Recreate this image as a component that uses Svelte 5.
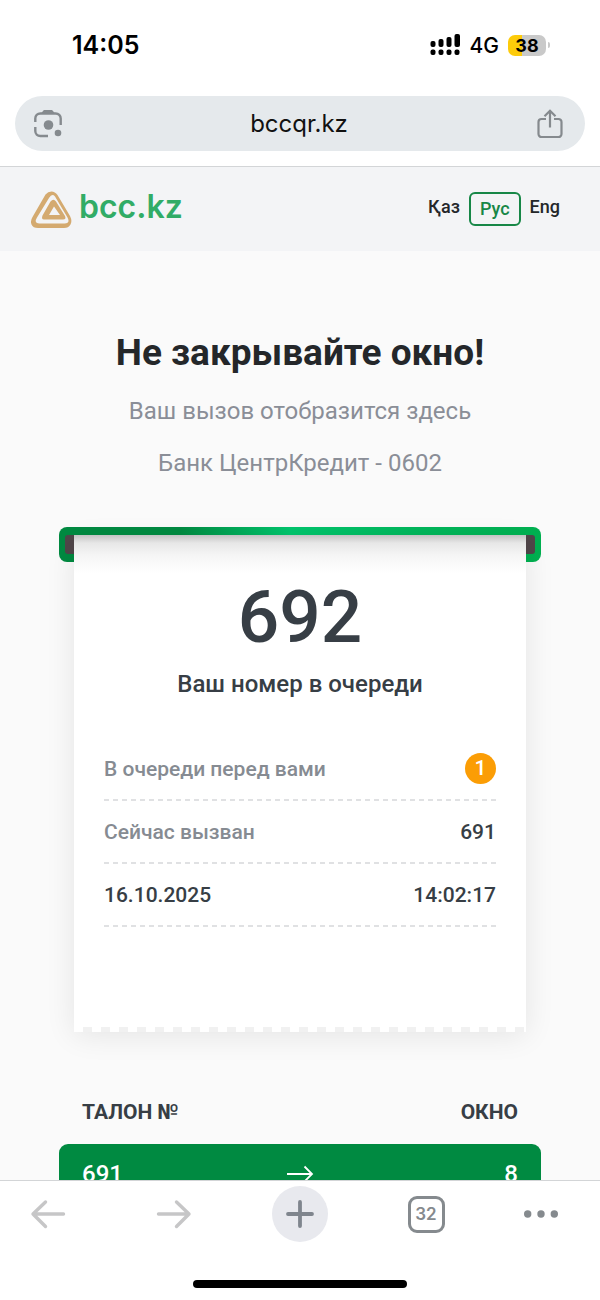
<script>
  let language = "Рус";
  const languages = ["Қаз", "Рус", "Eng"];

  // Ticket data
  const ticket = {
    number: 692,
    branch: "Банк ЦентрКредит - 0602",
    ahead: 1,
    current: 691,
    date: "16.10.2025",
    time: "14:02:17",
  };

  const calls = [{ ticket: 691, desk: 8 }];
</script>

<div class="screen">
  <!-- Status bar -->
  <div class="status-bar">
    <span class="clock">14:05</span>
    <div class="status-icons">
      <svg width="31" height="22" viewBox="0 0 31 22" aria-hidden="true">
        <rect x="0.500" y="7" width="5" height="6" rx="2" />
        <rect x="8.500" y="5" width="5" height="8" rx="2" />
        <rect x="16.500" y="3" width="5" height="10" rx="2" />
        <rect x="24.500" y="0" width="5.500" height="13" rx="2" />
        <rect x="0.500" y="15.500" width="5" height="5.500" rx="2" />
        <rect x="8.500" y="15.500" width="5" height="5.500" rx="2" />
        <rect x="16.500" y="15.500" width="5" height="5.500" rx="2" />
        <rect x="24.500" y="15.500" width="5" height="5.500" rx="2" />
      </svg>
      <span class="network">4G</span>
      <div class="battery">
        <span class="battery-level">38</span>
        <span class="battery-cap"></span>
      </div>
    </div>
  </div>

  <!-- Address bar -->
  <div class="address-bar">
    <div class="address">
      <button class="icon-button" aria-label="Камера">
        <svg width="30" height="30" viewBox="0 0 30 30" fill="none" stroke="#858a8e" stroke-width="2.4">
          <path d="M2.300 13V9.500a5 5 0 0 1 5-5h15.400a5 5 0 0 1 5 5V16" />
          <path d="M2.300 18v4a5 5 0 0 0 5 5H15" />
          <path d="M8 4.500L10 2c.5-.7 1-1 2-1h6c1 0 1.500.3 2 1l2 2.500z" fill="#858a8e" stroke="none" />
          <circle cx="15.500" cy="16" r="4.800" fill="#858a8e" stroke="none" />
          <circle cx="25" cy="24" r="3.300" fill="#858a8e" stroke="none" />
        </svg>
      </button>
      <a class="url" href="#top">bccqr.kz</a>
      <button class="icon-button" aria-label="Поделиться">
        <svg width="30" height="30" viewBox="0 0 30 30" fill="none" stroke="#858a8e" stroke-width="2.200">
          <path d="M11 10H6.500a3 3 0 0 0-3 3v12a3 3 0 0 0 3 3h17a3 3 0 0 0 3-3V13a3 3 0 0 0-3-3H19" />
          <path d="M15 18.500V2M9.500 7.300L15 1.800l5.500 5.500" />
        </svg>
      </button>
    </div>
  </div>

  <div class="page" id="top">
    <header>
      <a class="logo" href="#top">
        <svg width="42" height="38" viewBox="0 0 42 38" fill="#d4aa70" fill-rule="evenodd" aria-hidden="true">
          <path d="M15.500 3.500Q18 .5 21.500 .5Q25 .5 27.500 4L40 25Q42.500 30 40.500 33.500Q38.500 37 34 37H8Q3 37 1.500 33.500Q0 30 2.500 26ZM19 7L7 26.500Q3.500 32.500 9.500 32.500H34.500Q40.500 32.500 37.500 26.500L25 5.500Q22 2 19 7Z" />
          <path d="M20.500 10.500Q23.500 7 26 10.500L35 25Q36.500 28.500 33 28.500H14Q11 28.500 12.500 24.500ZM24 15.500L19 24H30Z" />
        </svg>
        <span>bcc.kz</span>
      </a>
      <nav class="languages">
        {#each languages as item}
          <button class:active={item === language} on:click={() => (language = item)}>{item}</button>
        {/each}
      </nav>
    </header>

    <main>
      <h1>Не закрывайте окно!</h1>
      <p class="hint">Ваш вызов отобразится здесь</p>
      <p class="hint">{ticket.branch}</p>

      <section class="ticket">
        <div class="slot"><div class="slot-hole"></div></div>
        <div class="paper">
          <div class="number">{ticket.number}</div>
          <div class="caption">Ваш номер в очереди</div>
          <dl>
            <div class="row">
              <dt>В очереди перед вами</dt>
              <dd class="badge">{ticket.ahead}</dd>
            </div>
            <div class="row">
              <dt>Сейчас вызван</dt>
              <dd>{ticket.current}</dd>
            </div>
            <div class="row">
              <dt class="dark">{ticket.date}</dt>
              <dd>{ticket.time}</dd>
            </div>
          </dl>
        </div>
        <div class="teeth"></div>
      </section>

      <table>
        <thead>
          <tr>
            <th>ТАЛОН №</th>
            <td></td>
            <th>ОКНО</th>
          </tr>
        </thead>
        <tbody>
          {#each calls as call}
            <tr>
              <td>{call.ticket}</td>
              <td>
                <svg width="28" height="18" viewBox="0 0 28 18" fill="none" stroke="#fff" stroke-width="1.800" aria-hidden="true">
                  <path d="M1 9h25M18.500 1.500L26 9l-7.500 7.500" />
                </svg>
              </td>
              <td>{call.desk}</td>
            </tr>
          {/each}
        </tbody>
      </table>
    </main>
  </div>

  <!-- Browser toolbar -->
  <footer>
    <div class="toolbar">
      <button aria-label="Назад">
        <svg width="36" height="30" viewBox="0 0 36 30" fill="none" stroke="#c6c6c7" stroke-width="3.400" stroke-linecap="round" stroke-linejoin="round">
          <path d="M33.500 15H3M15.500 3L3 15l12.500 12.500" />
        </svg>
      </button>
      <button aria-label="Вперёд">
        <svg width="36" height="30" viewBox="0 0 36 30" fill="none" stroke="#c6c6c7" stroke-width="3.400" stroke-linecap="round" stroke-linejoin="round">
          <path d="M2.500 15H33M20.500 3L33 15 20.500 27.500" />
        </svg>
      </button>
      <button class="add" aria-label="Новая вкладка">
        <svg width="30" height="30" viewBox="0 0 30 30" fill="none" stroke="#7f858d" stroke-width="3.800" stroke-linecap="round">
          <path d="M3 15h24M15 3v24" />
        </svg>
      </button>
      <button><span class="tabs">32</span></button>
      <button class="menu" aria-label="Меню">
        <svg width="34" height="8" viewBox="0 0 34 8" fill="#858a8e">
          <circle cx="3.700" cy="4" r="3.700" />
          <circle cx="17" cy="4" r="3.700" />
          <circle cx="30.300" cy="4" r="3.700" />
        </svg>
      </button>
    </div>
    <div class="home-indicator"></div>
  </footer>
</div>

<style>
  .screen {
    display: flex;
    flex-direction: column;
    height: 100vh;
    background: #fff;
    color: #373e45;
    font-family: Roboto, "Liberation Sans", sans-serif;
  }

  button {
    padding: 0;
    border: none;
    background: none;
    color: inherit;
    font: inherit;
    cursor: pointer;
  }

  a {
    color: inherit;
    text-decoration: none;
  }

  svg {
    display: block;
  }

  .status-bar {
    display: flex;
    justify-content: space-between;
    align-items: center;
    height: 90px;
    padding: 0 50px 0 72px;
    color: #000;
    font-family: Inter, sans-serif;
  }

  .clock {
    font-size: 25px;
    font-weight: 600;
  }

  .status-icons {
    display: flex;
    align-items: center;
    gap: 9px;
  }

  .network {
    font-size: 21px;
    font-weight: 500;
  }

  .battery {
    display: flex;
    align-items: center;
    gap: 2px;
  }

  .battery-level {
    width: 38px;
    border-radius: 7px;
    background: linear-gradient(to right, #fdcb0a 38%, #c9c9c9 38%);
    font-size: 18px;
    font-weight: 700;
    line-height: 21px;
    text-align: center;
  }

  .battery-cap {
    width: 2px;
    height: 6px;
    border-radius: 0 2px 2px 0;
    background: #c9c9c9;
  }

  .address-bar {
    padding: 6px 15px 15px;
    border-bottom: 1px solid #d3d5d7;
  }

  .address {
    display: flex;
    align-items: center;
    justify-content: space-between;
    height: 55px;
    padding: 0 20px 0 18px;
    border-radius: 28px;
    background: #e5e9ec;
  }

  .url {
    color: #111;
    font-family: Inter, sans-serif;
    font-size: 24px;
  }

  .page {
    flex: 1;
    min-height: 0;
    overflow: hidden;
    background: #fafafa;
  }

  header {
    display: flex;
    justify-content: space-between;
    align-items: center;
    height: 84px;
    padding: 0 40px 0 30px;
    background: #f3f4f6;
  }

  .logo {
    display: flex;
    align-items: flex-start;
    gap: 7px;
    padding-top: 2px;
    color: #31ac66;
    font-family: Inter, sans-serif;
    font-size: 32px;
    font-weight: 600;
    line-height: 32px;
  }

  .languages {
    display: flex;
    align-items: flex-start;
    gap: 9px;
    color: #24272a;
    font-size: 18px;
    font-weight: 500;
    line-height: 30px;
  }

  .languages .active {
    padding: 0 9px;
    border: 2px solid #178747;
    border-radius: 6px;
    color: #178747;
  }

  main {
    padding: 80px 59px 0;
    text-align: center;
  }

  h1 {
    margin: 0 0 18px;
    color: #24272a;
    font-size: 37px;
    font-weight: 700;
    line-height: 44px;
  }

  .hint {
    margin: 0 0 16px;
    color: #8a8e97;
    font-size: 24px;
    line-height: 36px;
  }

  .ticket {
    margin-top: 46px;
  }

  .slot {
    height: 35px;
    box-sizing: border-box;
    padding: 8px 6px;
    border-radius: 8px;
    background: linear-gradient(to right, #008a41 25%, #00c56d 48%, #00b65b 75%, #00b050);
  }

  .slot-hole {
    height: 19px;
    border-radius: 3px;
    background: #504649;
  }

  .paper {
    position: relative;
    height: 492px;
    box-sizing: border-box;
    margin: -27px 15px 0;
    padding: 40px 30px 0;
    background: linear-gradient(to bottom, #c2c3c3 0, #e7e7e7 8px, #f5f5f5 20px, #fff 38px);
    box-shadow: 0 8px 28px rgba(0, 0, 0, 0.09);
  }

  .teeth {
    position: relative;
    height: 5px;
    margin: 0 15px;
    background: repeating-linear-gradient(to right, #fff 0 9px, #f1f1f1 9px 18px);
  }

  .number {
    font-size: 73px;
    font-weight: 500;
    line-height: 84px;
  }

  .caption {
    margin-top: 7px;
    font-size: 24px;
    font-weight: 500;
    line-height: 36px;
  }

  dl {
    margin: 36px 0 0;
  }

  .row {
    display: flex;
    justify-content: space-between;
    align-items: center;
    box-sizing: border-box;
    height: 63px;
    padding-bottom: 2px;
    background: repeating-linear-gradient(to right, #e0e1e3 0 5px, transparent 5px 9px) bottom / 100% 2px no-repeat;
    font-size: 21px;
    font-weight: 500;
  }

  dt {
    color: #868b92;
  }

  dt.dark {
    color: inherit;
  }

  dd {
    margin: 0;
  }

  .badge {
    width: 31px;
    border-radius: 50%;
    background: #fb9d05;
    color: #fff;
    line-height: 31px;
  }

  table {
    width: 100%;
    margin-top: 60px;
    border-spacing: 0;
    table-layout: fixed;
  }

  th,
  td {
    padding: 0 23px;
    text-align: left;
  }

  th {
    height: 40px;
    padding-bottom: 12px;
    font-size: 21px;
    font-weight: 700;
    white-space: nowrap;
  }

  th:last-child,
  td:last-child {
    text-align: right;
  }

  tbody td {
    height: 60px;
    background: #008a41;
    color: #fff;
    font-size: 24px;
    font-weight: 500;
  }

  tbody td:first-child {
    border-radius: 9px 0 0 9px;
  }

  tbody td:last-child {
    border-radius: 0 9px 9px 0;
  }

  td svg {
    margin: 0 auto;
  }

  footer {
    padding-bottom: 12px;
    border-top: 1px solid #d3d5d7;
    background: #fff;
  }

  .toolbar {
    display: flex;
    justify-content: space-between;
    align-items: center;
    padding: 5px 20px 38px;
  }

  .toolbar button {
    display: flex;
    justify-content: center;
    align-items: center;
    width: 56px;
    height: 56px;
  }

  .toolbar .add {
    border-radius: 50%;
    background: #e8e9ee;
  }

  .toolbar .menu {
    justify-content: flex-start;
  }

  .tabs {
    width: 31px;
    border: 3px solid #858a8e;
    border-radius: 9px;
    color: #858a8e;
    font-family: Inter, sans-serif;
    font-size: 17px;
    font-weight: 600;
    line-height: 31px;
  }

  .home-indicator {
    width: 214px;
    height: 8px;
    margin: 0 auto;
    border-radius: 4px;
    background: #000;
  }
</style>
